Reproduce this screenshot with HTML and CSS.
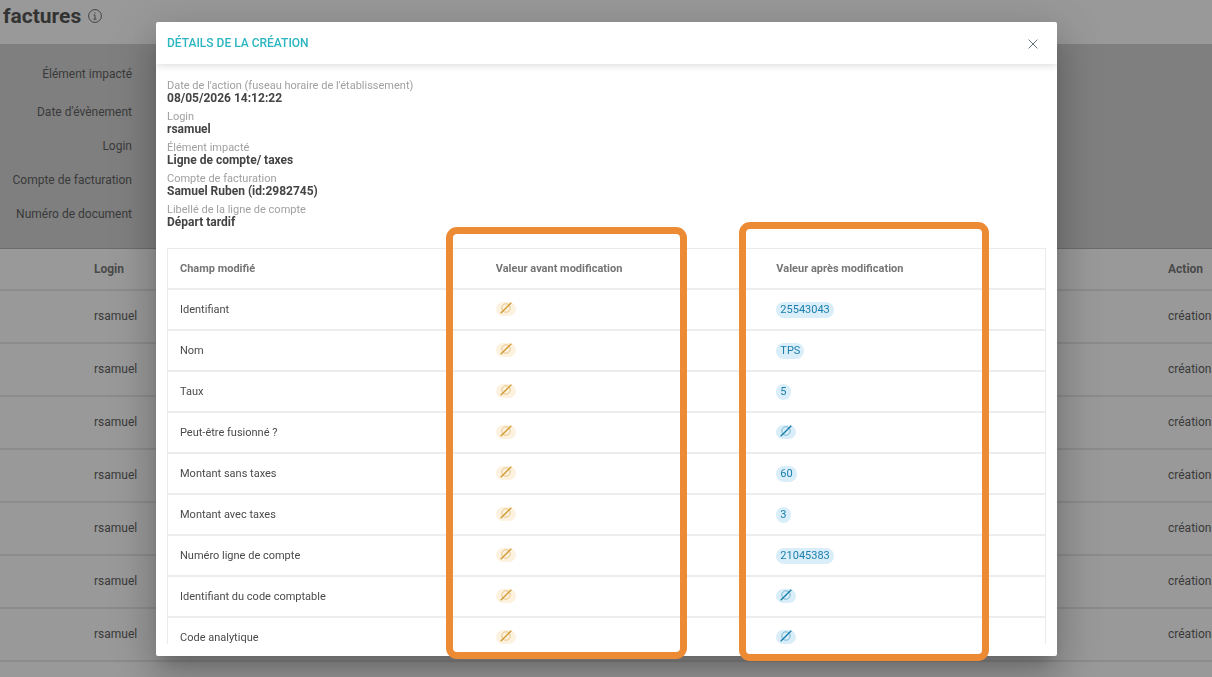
FILE: index.html
```
<!DOCTYPE html>
<html lang="fr">
<head>
<meta charset="utf-8">
<title>Historique des factures</title>
<link rel="stylesheet" href="styles.css">
</head>
<body>
<svg class="sprite" aria-hidden="true">
  <symbol id="empty" viewBox="0 0 12 12">
    <circle cx="6" cy="6" r="4.2" fill="none" stroke="currentColor" stroke-width="1" opacity=".5"/>
    <path d="M.7 11.3 11.3.7" fill="none" stroke="currentColor" stroke-width="1.4"/>
  </symbol>
</svg>
<main class="page">
  <header class="page-header">
    <h1 class="page-title">factures</h1>
    <svg class="info" viewBox="0 0 14 14" aria-hidden="true"><circle cx="7" cy="7" r="6.4"/><path d="M5.6 6H7v4M5.4 10.2h3.2M7 3.4v1.2"/></svg>
  </header>
  <section class="filters">
    <p class="filter">Élément impacté</p>
    <p class="filter">Date d'évènement</p>
    <p class="filter">Login</p>
    <p class="filter">Compte de facturation</p>
    <p class="filter">Numéro de document</p>
  </section>
  <table class="history">
    <colgroup><col class="col-pad"><col><col class="col-action"></colgroup>
    <thead><tr><th></th><th>Login</th><th>Action</th></tr></thead>
    <tbody>
      <tr><td></td><td>rsamuel</td><td>création</td></tr>
      <tr><td></td><td>rsamuel</td><td>création</td></tr>
      <tr><td></td><td>rsamuel</td><td>création</td></tr>
      <tr><td></td><td>rsamuel</td><td>création</td></tr>
      <tr><td></td><td>rsamuel</td><td>création</td></tr>
      <tr><td></td><td>rsamuel</td><td>création</td></tr>
      <tr><td></td><td>rsamuel</td><td>création</td></tr>
    </tbody>
  </table>
</main>
<div class="overlay">
  <section class="dialog" role="dialog" aria-labelledby="dialog-title">
    <header class="dialog-header">
      <h2 class="dialog-title" id="dialog-title">DÉTAILS DE LA CRÉATION</h2>
      <button class="close" type="button" aria-label="Fermer"><svg viewBox="0 0 10 10"><path d="M.6.6l8.8 8.8M9.4.6.6 9.4"/></svg></button>
    </header>
    <div class="dialog-body">
      <dl class="facts">
        <div class="fact"><dt>Date de l'action (fuseau horaire de l'établissement)</dt><dd>08/05/2026 14:12:22</dd></div>
        <div class="fact"><dt>Login</dt><dd>rsamuel</dd></div>
        <div class="fact"><dt>Élément impacté</dt><dd>Ligne de compte/ taxes</dd></div>
        <div class="fact"><dt>Compte de facturation</dt><dd>Samuel Ruben (id:2982745)</dd></div>
        <div class="fact"><dt>Libellé de la ligne de compte</dt><dd>Départ tardif</dd></div>
      </dl>
      <table class="changes">
        <colgroup><col class="col-field"><col class="col-before"><col></colgroup>
        <thead><tr><th>Champ modifié</th><th>Valeur avant modification</th><th>Valeur après modification</th></tr></thead>
        <tbody>
          <tr><td>Identifiant</td><td><span class="chip before none"><svg><use href="#empty"/></svg></span></td><td><span class="chip after">25543043</span></td></tr>
          <tr><td>Nom</td><td><span class="chip before none"><svg><use href="#empty"/></svg></span></td><td><span class="chip after">TPS</span></td></tr>
          <tr><td>Taux</td><td><span class="chip before none"><svg><use href="#empty"/></svg></span></td><td><span class="chip after">5</span></td></tr>
          <tr><td>Peut-être fusionné ?</td><td><span class="chip before none"><svg><use href="#empty"/></svg></span></td><td><span class="chip after none"><svg><use href="#empty"/></svg></span></td></tr>
          <tr><td>Montant sans taxes</td><td><span class="chip before none"><svg><use href="#empty"/></svg></span></td><td><span class="chip after">60</span></td></tr>
          <tr><td>Montant avec taxes</td><td><span class="chip before none"><svg><use href="#empty"/></svg></span></td><td><span class="chip after">3</span></td></tr>
          <tr><td>Numéro ligne de compte</td><td><span class="chip before none"><svg><use href="#empty"/></svg></span></td><td><span class="chip after">21045383</span></td></tr>
          <tr><td>Identifiant du code comptable</td><td><span class="chip before none"><svg><use href="#empty"/></svg></span></td><td><span class="chip after none"><svg><use href="#empty"/></svg></span></td></tr>
          <tr><td>Code analytique</td><td><span class="chip before none"><svg><use href="#empty"/></svg></span></td><td><span class="chip after none"><svg><use href="#empty"/></svg></span></td></tr>
        </tbody>
      </table>
    </div>
    <div class="mark mark-before"></div>
    <div class="mark mark-after"></div>
  </section>
</div>
</body>
</html>
```
FILE: styles.css
```
* { box-sizing: border-box; }
body {
  margin: 0;
  height: 100vh;
  overflow: hidden;
  background: #999;
  color: #3a3a3a;
  font: 12px/16px Roboto, sans-serif;
}
h1, h2, p, dl, dd { margin: 0; }
.sprite { position: absolute; width: 0; height: 0; }

.page-header {
  display: flex;
  align-items: center;
  gap: 7px;
  height: 44px;
  padding: 0 3px 12px;
}
.page-title { font-size: 21px; line-height: 24px; font-weight: 700; color: #333; }
.info { width: 14px; height: 14px; fill: none; stroke: #444; stroke-width: 1; }

.filters {
  display: flex;
  flex-direction: column;
  gap: 18px;
  height: 205px;
  padding-top: 22px;
  background: #7f7f7f;
  border-bottom: 1px solid #6c6c6c;
}
.filter { width: 132px; text-align: right; }
.filter:first-child { padding-bottom: 4px; }

table { width: 100%; border-spacing: 0; table-layout: fixed; }
th, td { text-align: left; }
.history th, .history td { padding: 0 13px; border-bottom: 2px solid #8c8c8c; white-space: nowrap; }
.history th { height: 42px; color: #4a4a4a; font-weight: 700; }
.history td { height: 53px; padding-bottom: 1px; }
.col-pad { width: 81px; }
.col-action { width: 57px; }

.overlay {
  position: fixed;
  inset: 0;
  display: flex;
  justify-content: center;
  padding: 22px 155px 21px 156px;
}
.dialog {
  position: relative;
  display: flex;
  flex-direction: column;
  width: 100%;
  background: #fff;
  border-radius: 2px;
  box-shadow: 0 11px 15px -7px rgba(0,0,0,.2), 0 24px 38px 3px rgba(0,0,0,.14), 0 9px 46px 8px rgba(0,0,0,.12);
}
.dialog-header {
  display: flex;
  flex: none;
  align-items: center;
  justify-content: space-between;
  padding: 0 19px 1px 11px;
  height: 42px;
  box-shadow: 0 1px 8px rgba(0,0,0,.16);
  clip-path: inset(0 0 -10px 0);
}
.dialog-title { font-size: 12px; line-height: 16px; font-weight: 500; color: #2bb5c0; }
.close { display: flex; padding: 2px 0 0; border: 0; background: none; }
.close svg { width: 10px; height: 10px; fill: none; stroke: #68737a; stroke-width: 1; }
.dialog-body { flex: 1; min-height: 0; overflow: hidden; margin: 15px 11px 12px; }
.facts { display: flex; flex-direction: column; gap: 5px; padding-bottom: 19px; }
.fact { line-height: 13px; }
.fact dt { font-size: 11px; color: #a0a0a0; }
.fact dd { font-size: 12px; font-weight: 700; color: #444; }

.changes { border: 1px solid #ebebeb; border-bottom: 0; color: #4a4a4a; font-size: 11px; }
.changes th, .changes td { height: 41px; padding: 0 12px; border-bottom: 2px solid #ededed; }
.changes th { color: #757575; font-weight: 700; }
.col-field { width: 36%; }
.col-before { width: 32%; }
.chip {
  display: inline-flex;
  align-items: center;
  height: 16px;
  padding: 0 4px;
  border-radius: 8px;
  vertical-align: middle;
}
.chip svg { width: 12px; height: 12px; }
.none { align-items: flex-start; height: 14px; margin-bottom: 2px; }
.before { background: #fdf2df; color: #d29a35; }
.after { background: #d9eef8; color: #1b7eac; }

.mark { position: absolute; border: 7px solid #ed8b35; border-radius: 11px; pointer-events: none; }
.mark-before { top: 205px; bottom: -3px; left: 290px; width: 241px; }
.mark-after { top: 200px; bottom: -5px; left: 583px; width: 250px; }
```
